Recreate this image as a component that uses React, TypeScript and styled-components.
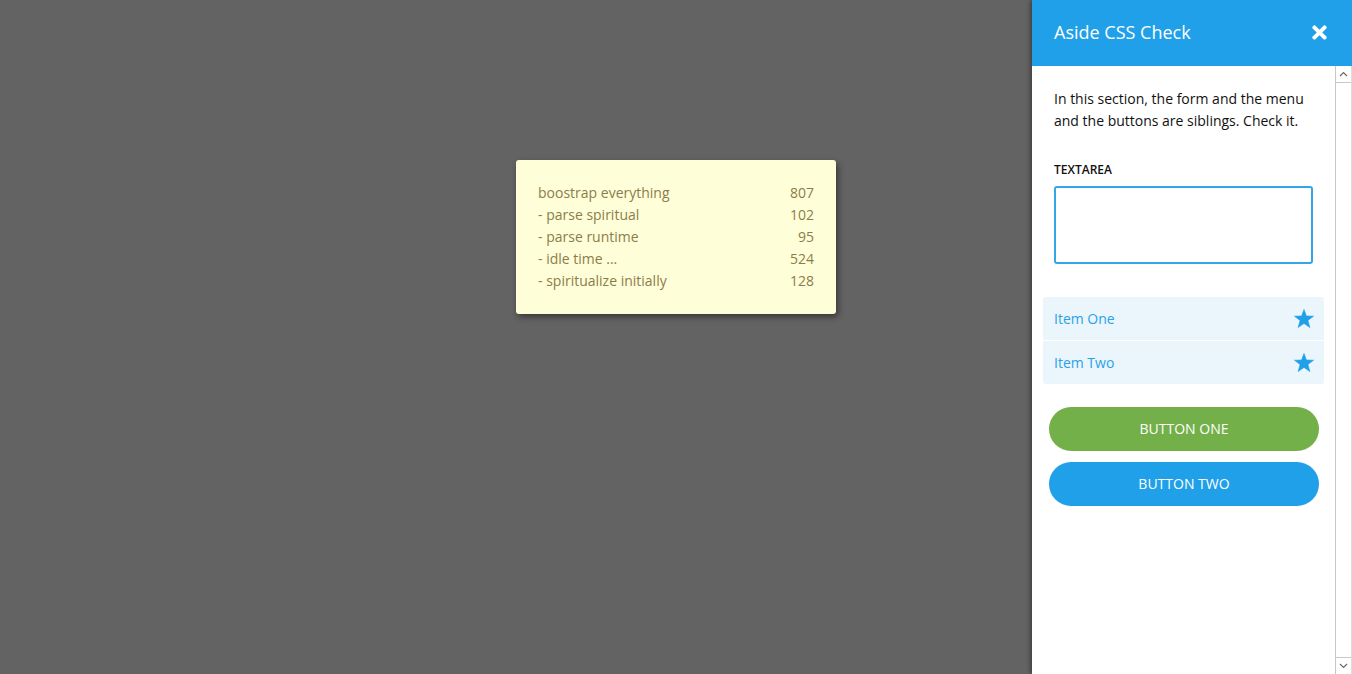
import React from "react";
import styled, { createGlobalStyle } from "styled-components";
import { FaTimes } from "react-icons/fa";

const GlobalStyle = createGlobalStyle`
  html, body {
    margin: 0;
    padding: 0;
    height: 100%;
    overflow: hidden;
  }
  body {
    font-family: "Open Sans", "Noto Sans", sans-serif;
    background: #636363;
  }
  #root { height: 100%; }
  * { box-sizing: border-box; }
`;

const Page = styled.div`
  position: relative;
  height: 674px;
  width: 1352px;
`;

const Stage = styled.main`
  display: flex;
  justify-content: center;
  align-items: flex-start;
  padding-top: 160px;
  height: 100%;
`;

const Card = styled.div`
  width: 320px;
  background: #feffd8;
  border-radius: 3px;
  box-shadow: 2px 3px 6px rgba(0, 0, 0, 0.45);
  padding: 22px;
  color: #8c7c4b;
  font-size: 14px;
  line-height: 22px;
`;

const Row = styled.div`
  display: flex;
  justify-content: space-between;
`;

const Aside = styled.aside`
  position: absolute;
  top: 0;
  right: 0;
  width: 320px;
  height: 674px;
  background: #fff;
  display: flex;
  flex-direction: column;
  box-shadow: -2px 0 4px rgba(0, 0, 0, 0.35);
`;

const Header = styled.header`
  height: 66px;
  flex: 0 0 66px;
  background: #1fa0e8;
  color: #fff;
  display: flex;
  align-items: center;
  justify-content: space-between;
  padding: 0 22px 2px 22px;
`;

const Title = styled.h1`
  margin: 0;
  font-size: 18px;
  font-weight: 400;
  line-height: 24px;
`;

const Close = styled.button`
  border: 0;
  background: transparent;
  color: #fff;
  padding: 0;
  display: flex;
  align-items: center;
  cursor: pointer;
`;

const Scroller = styled.div`
  flex: 1;
  display: flex;
  min-height: 0;
`;

const Body = styled.div`
  flex: 1;
  overflow: hidden;
  padding: 22px;
`;

const ScrollBar = styled.div`
  width: 17px;
  flex: 0 0 17px;
  display: flex;
  flex-direction: column;
  border-left: 1px solid #c8c8c8;
  border-right: 1px solid #dcdcdc;
  background: #fff;
`;

const ScrollArrow = styled.div<{ $down?: boolean }>`
  height: 17px;
  flex: 0 0 17px;
  display: flex;
  align-items: center;
  justify-content: center;
  border-top: ${(p) => (p.$down ? "1px solid #c8c8c8" : "0")};
  border-bottom: ${(p) => (p.$down ? "0" : "1px solid #c8c8c8")};
`;

const ScrollTrack = styled.div`
  flex: 1;
`;

const Intro = styled.p`
  margin: 0 0 30px;
  font-size: 14px;
  line-height: 22px;
  color: #111;
`;

const Label = styled.label`
  display: block;
  font-size: 12px;
  font-weight: 600;
  line-height: 16px;
  color: #111;
  margin-bottom: 8px;
`;

const TextArea = styled.textarea`
  display: block;
  width: 100%;
  height: 78px;
  border: 2px solid #35a5e8;
  border-radius: 3px;
  resize: none;
  outline: none;
  font-family: inherit;
  margin-bottom: 33px;
`;

const Menu = styled.ul`
  list-style: none;
  margin: 0 -11px 23px;
  padding: 0;
  border-radius: 3px;
  overflow: hidden;
`;

const MenuItem = styled.li`
  display: flex;
  align-items: center;
  justify-content: space-between;
  height: 43px;
  padding: 0 10px 0 11px;
  background: #eaf5fc;
  color: #2aa2e8;
  font-size: 14px;
  & + & {
    border-top: 1px solid #fff;
    height: 44px;
  }
`;

const Buttons = styled.div`
  display: flex;
  flex-direction: column;
  gap: 11px;
  margin: 0 -6px 0 -5px;
`;

const Button = styled.button<{ $tone: string }>`
  height: 44px;
  border: 0;
  border-radius: 22px;
  background: ${(p) => p.$tone};
  color: #fff;
  font-family: inherit;
  font-size: 14px;
  text-transform: uppercase;
  cursor: pointer;
  padding: 0 0 2px;
`;

const rows: [string, number][] = [
  ["boostrap everything", 807],
  ["- parse spiritual", 102],
  ["- parse runtime", 95],
  ["- idle time ...", 524],
  ["- spiritualize initially", 128],
];

const Chevron = ({ down }: { down?: boolean }) => (
  <svg width="9" height="6" viewBox="0 0 9 6">
    <path
      d={down ? "M1 1 L4.5 4.5 L8 1" : "M1 5 L4.5 1.5 L8 5"}
      fill="none"
      stroke="#6a6a6a"
      strokeWidth="1.2"
    />
  </svg>
);

const Star = () => (
  <svg width="20" height="19" viewBox="0 0 20 19">
    <polygon
      points="10,0.5 12.4,7 19.5,7.2 13.9,11.5 15.9,18.5 10,14.4 4.1,18.5 6.1,11.5 0.5,7.2 7.6,7"
      fill="#1fa0e8"
      stroke="#1fa0e8"
      strokeWidth="0.6"
      strokeLinejoin="round"
    />
  </svg>
);

export default function App() {
  return (
    <>
      <GlobalStyle />
      <Page>
        <Stage>
          <Card>
            {rows.map(([name, v]) => (
              <Row key={name}>
                <span>{name}</span>
                <span>{v}</span>
              </Row>
            ))}
          </Card>
        </Stage>
        <Aside>
          <Header>
            <Title>Aside CSS Check</Title>
            <Close aria-label="close">
              <FaTimes size={21} />
            </Close>
          </Header>
          <Scroller>
            <Body>
              <Intro>
                In this section, the form and the menu and the buttons are siblings. Check it.
              </Intro>
              <Label>TEXTAREA</Label>
              <TextArea />
              <Menu>
                <MenuItem>
                  Item One <Star />
                </MenuItem>
                <MenuItem>
                  Item Two <Star />
                </MenuItem>
              </Menu>
              <Buttons>
                <Button $tone="#74b04a">Button One</Button>
                <Button $tone="#1fa0e8">Button Two</Button>
              </Buttons>
            </Body>
            <ScrollBar>
              <ScrollArrow>
                <Chevron />
              </ScrollArrow>
              <ScrollTrack />
              <ScrollArrow $down>
                <Chevron down />
              </ScrollArrow>
            </ScrollBar>
          </Scroller>
        </Aside>
      </Page>
    </>
  );
}
